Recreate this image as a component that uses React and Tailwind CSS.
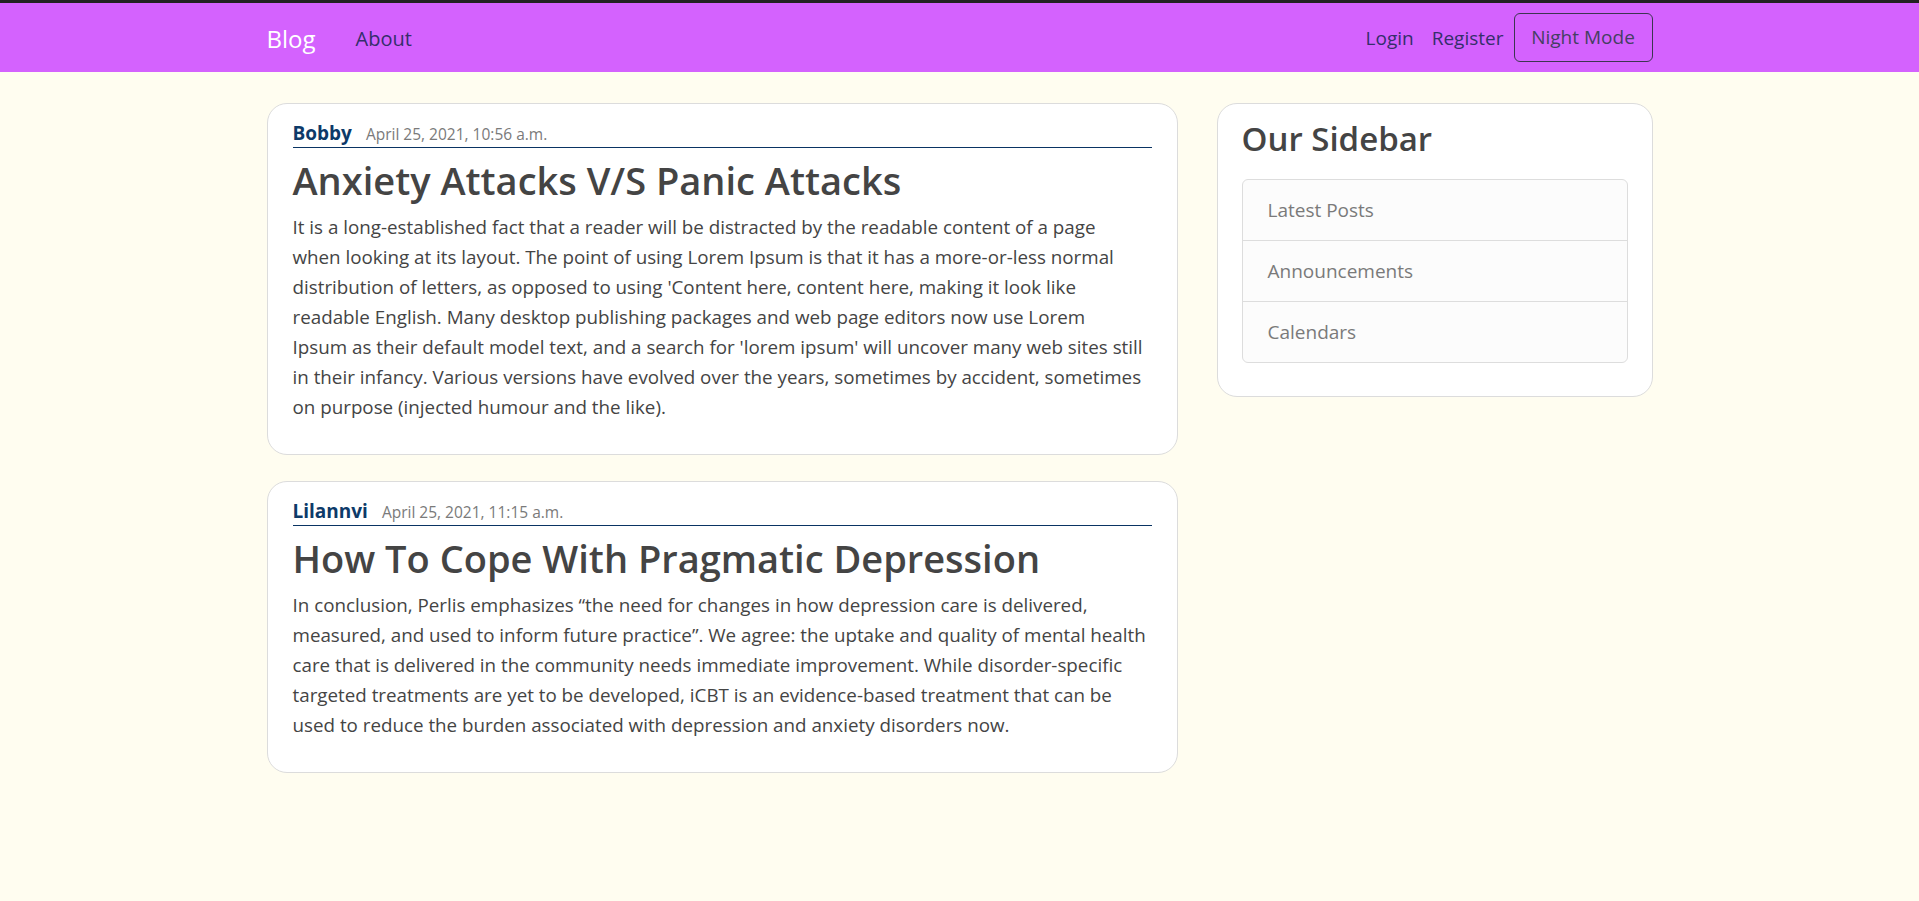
const posts = [
  {
    author: "Bobby",
    date: "April 25, 2021, 10:56 a.m.",
    title: "Anxiety Attacks V/S Panic Attacks",
    lines: [
      "It is a long-established fact that a reader will be distracted by the readable content of a page",
      "when looking at its layout. The point of using Lorem Ipsum is that it has a more-or-less normal",
      "distribution of letters, as opposed to using 'Content here, content here, making it look like",
      "readable English. Many desktop publishing packages and web page editors now use Lorem",
      "Ipsum as their default model text, and a search for 'lorem ipsum' will uncover many web sites still",
      "in their infancy. Various versions have evolved over the years, sometimes by accident, sometimes",
      "on purpose (injected humour and the like).",
    ],
  },
  {
    author: "Lilannvi",
    date: "April 25, 2021, 11:15 a.m.",
    title: "How To Cope With Pragmatic Depression",
    lines: [
      "In conclusion, Perlis emphasizes \u201cthe need for changes in how depression care is delivered,",
      "measured, and used to inform future practice\u201d. We agree: the uptake and quality of mental health",
      "care that is delivered in the community needs immediate improvement. While disorder-specific",
      "targeted treatments are yet to be developed, iCBT is an evidence-based treatment that can be",
      "used to reduce the burden associated with depression and anxiety disorders now.",
    ],
  },
];

const sidebarLinks = ["Latest Posts", "Announcements", "Calendars"];

function PostCard({ post }) {
  return (
    <article className="bg-white border border-[#dcdcdc] rounded-[20px] px-[25px] pt-4 pb-4">
      <div className="flex items-baseline gap-[14px] border-b border-[#0a3463] h-[28px]">
        <span className="text-[19px] font-bold text-[#0d3a69] leading-[27px]">{post.author}</span>
        <span className="text-[15.5px] text-[#7a7a7a]">{post.date}</span>
      </div>
      <h1 className="mt-2 mb-2 text-[38px] font-semibold leading-[48px] text-[#444444]">{post.title}</h1>
      <p className="mb-4 text-[18.8px] leading-[30px] text-[#444444]">
        {post.lines.map((l, i) => (
          <span key={i}>
            {l}
            {i < post.lines.length - 1 && <br />}
          </span>
        ))}
      </p>
    </article>
  );
}

export default function App() {
  return (
    <div className="min-h-screen bg-[#fffdf0] font-['Open_Sans',sans-serif]">
      <div className="h-[3px] bg-[#222222]" />
      {/* Navbar */}
      <nav className="bg-[#d462fe] h-[69px]">
        <div className="mx-auto w-[1386px] h-full flex items-center justify-between">
          <div className="flex items-center gap-[40px] pt-[3px]">
            <a className="text-[24px] text-white">Blog</a>
            <a className="text-[20px] text-[#352e6b]">About</a>
          </div>
          <div className="flex items-center">
            <a className="text-[19px] text-[#352e6b] pt-[2px]">Login</a>
            <a className="ml-[18px] text-[19px] text-[#352e6b] pt-[2px]">Register</a>
            <button className="ml-[10px] h-[49px] w-[139px] border border-[#3b3550] rounded-[6px] text-[19px] text-[#453f63]">
              Night Mode
            </button>
          </div>
        </div>
      </nav>

      {/* Content */}
      <main className="mx-auto w-[1386px] pt-[31px] flex items-start gap-[39px]">
        <div className="w-[911px] flex flex-col gap-[26px]">
          {posts.map((p) => (
            <PostCard key={p.author} post={p} />
          ))}
        </div>

        <aside className="w-[436px] bg-white border border-[#dcdcdc] rounded-[20px] px-6 pt-4 pb-4">
          <h2 className="text-[33px] font-semibold leading-[38px] text-[#444444] mb-[21px]">Our Sidebar</h2>
          <ul className="mb-[17px] border border-[#dddddd] rounded-[6px] bg-[#fcfcfc]">
            {sidebarLinks.map((l, i) => (
              <li
                key={l}
                className={`px-[25px] py-[15px] text-[19px] leading-[30px] text-[#7a7a7a] ${i > 0 ? "border-t border-[#dddddd]" : ""}`}
              >
                {l}
              </li>
            ))}
          </ul>
        </aside>
      </main>
    </div>
  );
}
